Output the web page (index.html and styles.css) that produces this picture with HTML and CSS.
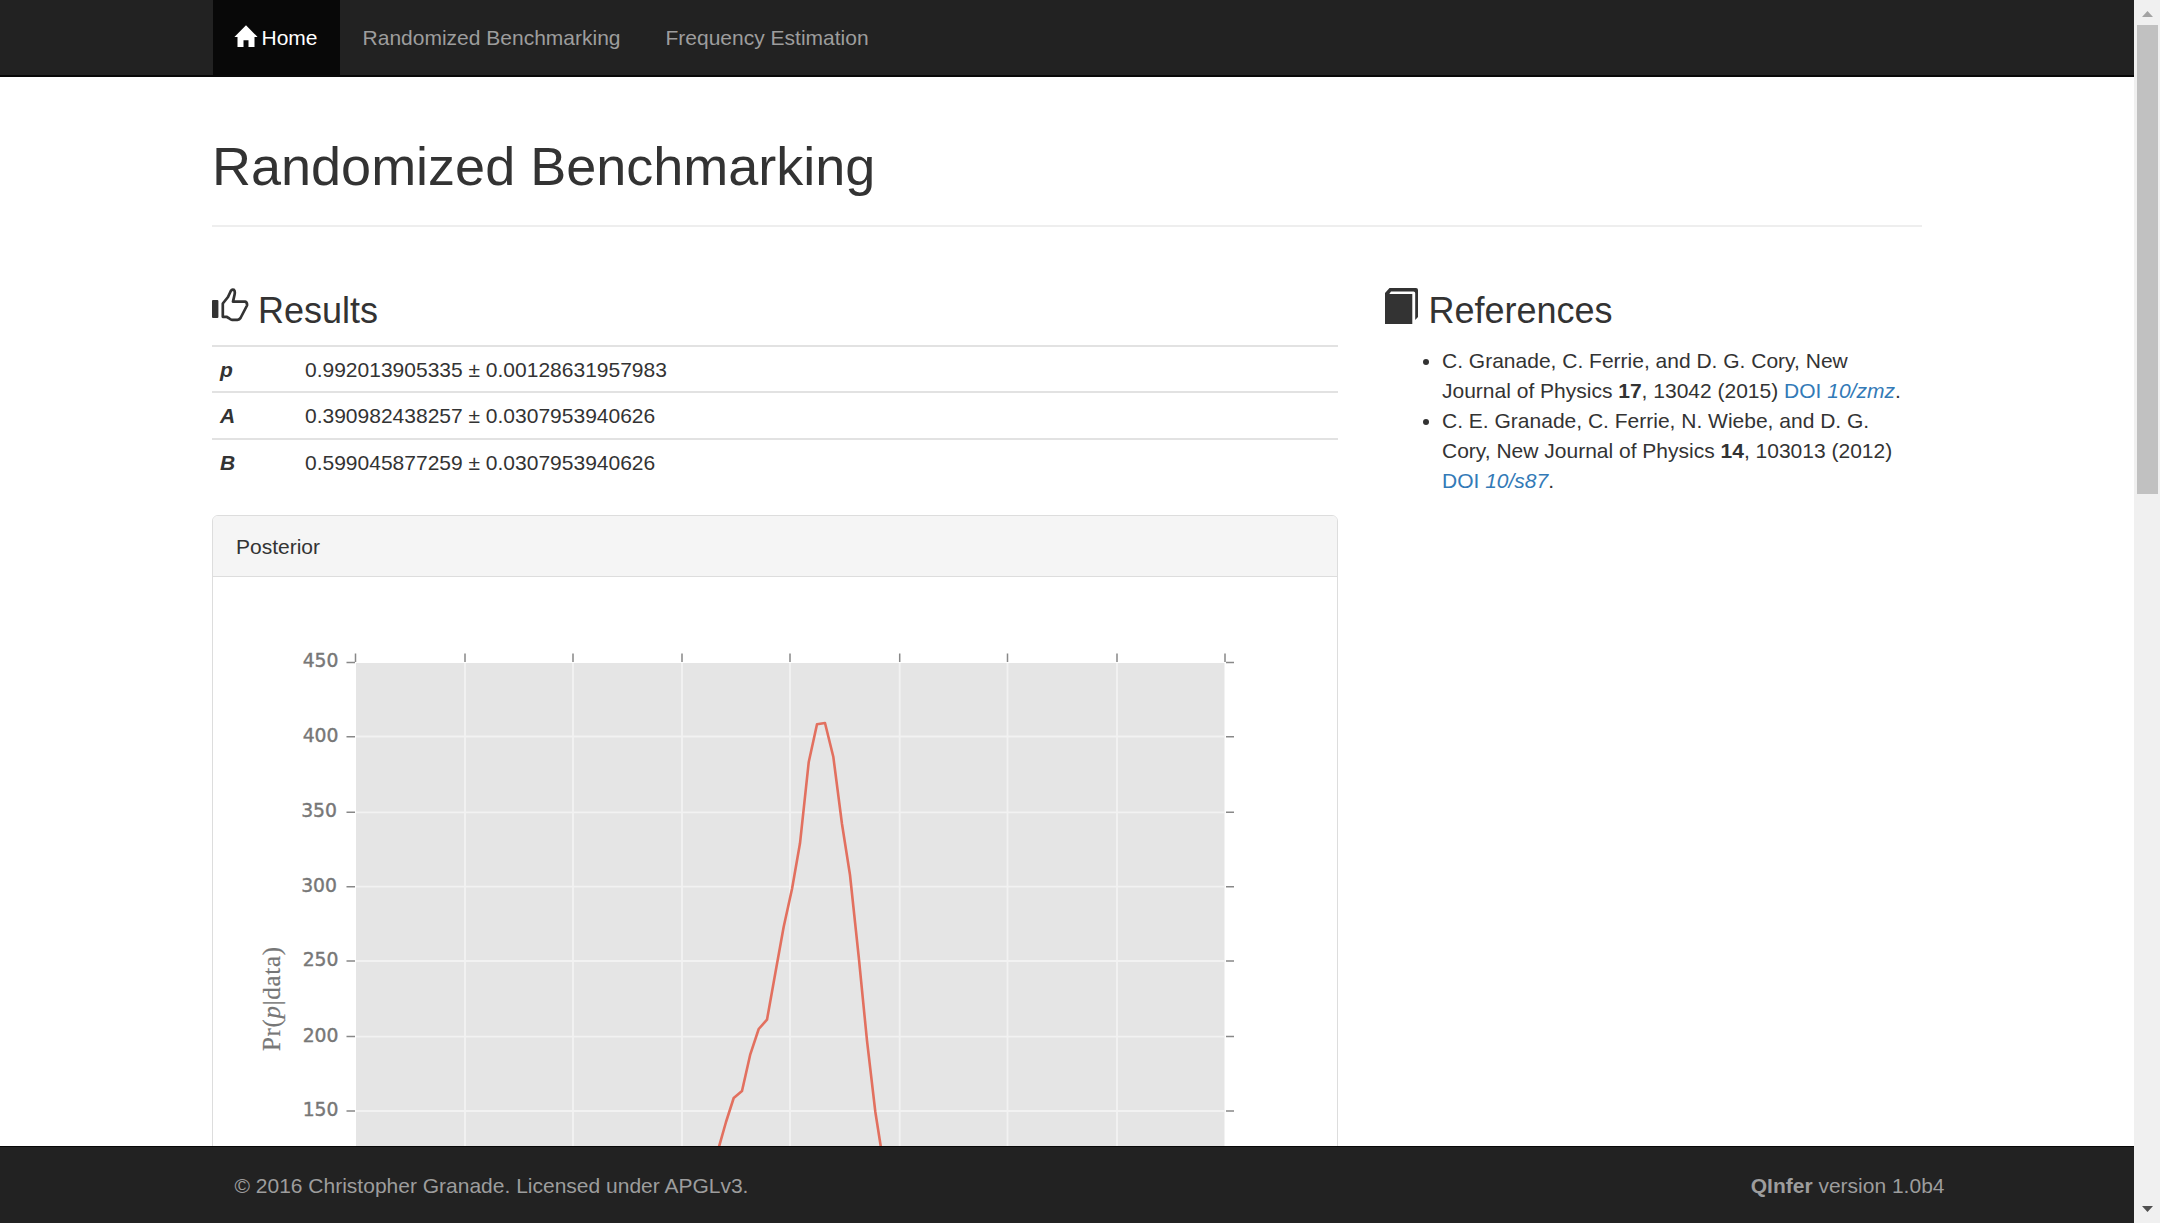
FILE: index.html
```html
<!DOCTYPE html>
<html lang="en">
<head>
<meta charset="utf-8">
<title>Randomized Benchmarking</title>
<link rel="stylesheet" href="styles.css">
</head>
<body>
<div class="page">
  <nav class="navbar">
    <a class="nav-item active"><svg class="icon-home" viewBox="0 0 24 23"><path d="M12 0.3L23.6 12H20.5V22H14.5V15.2H9.5V22H3.5V12H0.4Z"/></svg><span>Home</span></a>
    <a class="nav-item">Randomized Benchmarking</a>
    <a class="nav-item">Frequency Estimation</a>
  </nav>
  <main class="content">
    <h1>Randomized Benchmarking</h1>
    <div class="columns">
      <section class="results">
        <h3><svg class="icon-thumb" viewBox="0 0 37 34"><rect x="0" y="12" width="6.4" height="18" rx="1"/><path class="outline" d="M10.8 15.5L16 9L18.8 3Q20 0.9 21.8 1.8Q23.3 3.2 22.6 6.5L21 13.6H33Q35.4 14.3 35 17.5L28.5 30Q27.5 31.8 25.5 31.8H20Q18.5 31.8 17 30.2L14.5 28.8H10.8Z"/></svg><span>Results</span></h3>
        <table>
          <tr class="first"><th>p</th><td>0.992013905335 ± 0.00128631957983</td></tr>
          <tr><th>A</th><td>0.390982438257 ± 0.0307953940626</td></tr>
          <tr><th>B</th><td>0.599045877259 ± 0.0307953940626</td></tr>
        </table>
        <div class="panel">
          <div class="panel-heading">Posterior</div>
          <div class="panel-body">
            <svg class="chart" viewBox="236 600 1080 560">
              <rect class="plot" x="356" y="663" width="868.5" height="497"/>
              <path class="grid" d="M465 663V1160M573 663V1160M682 663V1160M790 663V1160M899.7 663V1160M1007.5 663V1160M1117 663V1160M356 736.5H1224M356 812.3H1224M356 886.6H1224M356 961H1224M356 1036.6H1224M356 1111H1224"/>
              <path class="ticks" d="M355.5 653.5V662M465 653.5V662M573 653.5V662M682 653.5V662M790 653.5V662M899.7 653.5V662M1007.5 653.5V662M1117 653.5V662M1225 653.5V662M346.5 662.4H355M346.5 736.7H355M346.5 812.3H355M346.5 886.7H355M346.5 961H355M346.5 1036.5H355M346.5 1111H355M1226 662.4H1234M1226 736.7H1234M1226 812.3H1234M1226 886.7H1234M1226 961H1234M1226 1036.5H1234M1226 1111H1234"/>
              <g class="labels">
                <text x="338.5" y="667">450</text><text x="338.5" y="741.5">400</text><text x="337" y="817">350</text><text x="337" y="891.5">300</text><text x="338.5" y="965.7">250</text><text x="338.5" y="1041.5">200</text><text x="338.5" y="1116">150</text>
              </g>
              <text class="ylabel" transform="translate(280 1051) rotate(-90)" textLength="104">Pr(<tspan class="var">p</tspan>|data)</text>
              <path class="curve" d="M715 1160L719.3 1145.7L726 1122L733.7 1098L742 1091L750.3 1054.3L758.7 1029L767 1019.7L775.3 973.3L783.7 926.7L792 889L800 843.3L808.7 762.3L817 724.3L825 723L833.3 756.7L842 824L850 875L858.7 956.7L867 1040.7L875.3 1111.7L880.7 1146L883 1160"/>
            </svg>
          </div>
        </div>
      </section>
      <aside class="references">
        <h3><svg class="icon-book" viewBox="0 0 33 36"><path d="M0 36V5L4.5 0H31Q33 0 33 2V29L30.2 32V5Q30.2 3.4 28.5 3.4H6L4.3 6H27.3V36Z"/></svg><span>References</span></h3>
        <ul>
          <li>C. Granade, C. Ferrie, and D. G. Cory, New Journal of Physics <b>17</b>, 13042 (2015) <a>DOI <i>10/zmz</i></a>.</li>
          <li>C. E. Granade, C. Ferrie, N. Wiebe, and D. G. Cory, New Journal of Physics <b>14</b>, 103013 (2012) <a>DOI <i>10/s87</i></a>.</li>
        </ul>
      </aside>
    </div>
  </main>
  <footer class="footer">
    <span>© 2016 Christopher Granade. Licensed under APGLv3.</span>
    <span><b>QInfer</b> version 1.0b4</span>
  </footer>
</div>
<div class="scrollbar">
  <svg class="arrow up" viewBox="0 0 11 6"><path d="M0 6L5.5 0L11 6Z"/></svg>
  <div class="thumb"></div>
  <svg class="arrow down" viewBox="0 0 11 6"><path d="M0 0L5.5 6L11 0Z"/></svg>
</div>
</body>
</html>
```
FILE: styles.css
```css
* { box-sizing: border-box; }
body {
  margin: 0;
  width: 2160px;
  height: 1223px;
  overflow: hidden;
  display: flex;
  background: #fff;
  color: #333;
  font: 21px/30px "Liberation Sans", Arial, sans-serif;
}
.page { width: 2134px; height: 1223px; display: flex; flex-direction: column; }
.navbar {
  height: 77px;
  flex: none;
  display: flex;
  padding-left: 213px;
  background: #222;
  border-bottom: 2px solid #080808;
}
.nav-item { padding: 23px 22.5px 22px; color: #9d9d9d; white-space: nowrap; }
.nav-item.active { display: flex; gap: 4px; padding-left: 21.5px; background: #080808; color: #fff; }
.icon-home { width: 24px; height: 23px; margin-top: 2px; margin-left: -1px; fill: currentColor; }
.content { flex: 1; min-height: 0; overflow: hidden; padding: 0 212px 0 212px; }
h1 {
  margin: 59px 0 0;
  height: 91px;
  font-size: 54px;
  line-height: 60px;
  font-weight: 400;
  border-bottom: 2px solid #eee;
}
.columns { display: grid; grid-template-columns: 1126px 1fr; column-gap: 45px; margin-top: 60px; }
h3 {
  display: flex;
  margin: 0;
  height: 58px;
  font-size: 36px;
  line-height: 40px;
  font-weight: 400;
  padding-top: 4px;
}
h3 svg { fill: currentColor; flex: none; margin-top: -3px; }
.icon-thumb { width: 37px; height: 34px; margin-right: 9px; }
.icon-thumb .outline { fill: none; stroke: currentColor; stroke-width: 2.7; stroke-linejoin: round; }
.icon-book { width: 33px; height: 36px; margin-left: 2px; margin-right: 10.5px; }
table { width: 100%; border-collapse: separate; border-spacing: 0; margin-bottom: 30px; }
th, td { height: 47px; padding: 8px 8px 7px; border-top: 2px solid #e2e2e2; text-align: left; }
.first th, .first td { height: 46px; padding-bottom: 6px; }
th { width: 85px; font-style: italic; }
.panel { border: 1px solid #ddd; border-radius: 6px; }
.panel-heading {
  height: 61px;
  padding: 16px 23px 14px;
  background: #f5f5f5;
  border-bottom: 1px solid #ddd;
  border-radius: 5px 5px 0 0;
}
.panel-body { padding: 23px; }
.chart { display: block; width: 1080px; height: 560px; }
.plot { fill: #e5e5e5; }
.grid { fill: none; stroke: #f2f2f2; stroke-width: 1.8; }
.ticks { fill: none; stroke: #888; stroke-width: 1.5; }
.labels { font: 18.8px "DejaVu Sans", sans-serif; fill: #777; stroke: #777; stroke-width: 0.4; text-anchor: end; }
.ylabel { font: 25px "Liberation Serif", serif; fill: #777; stroke: #777; stroke-width: 0.2; }
.var { font-style: italic; }
.curve { fill: none; stroke: #e2705f; stroke-width: 2.6; stroke-linejoin: round; }
ul { margin: 0; padding: 1px 0 0 59px; }
.references a { color: #337ab7; }
.footer {
  height: 77px;
  flex: none;
  display: flex;
  justify-content: space-between;
  padding: 24px 189.5px 0 234.5px;
  background: #222;
  color: #9d9d9d;
  border-top: 1px solid #080808;
}
.scrollbar {
  width: 26px;
  height: 1223px;
  display: flex;
  flex-direction: column;
  background: #f0f0f0;
  padding: 11px 2px 11px 3px;
}
.arrow { width: 11px; height: 6px; margin-left: 5px; flex: none; }
.up { fill: #a3a3a3; }
.down { fill: #505050; margin-top: auto; }
.thumb { height: 469px; margin-top: 8px; background: #c1c1c1; }
```
